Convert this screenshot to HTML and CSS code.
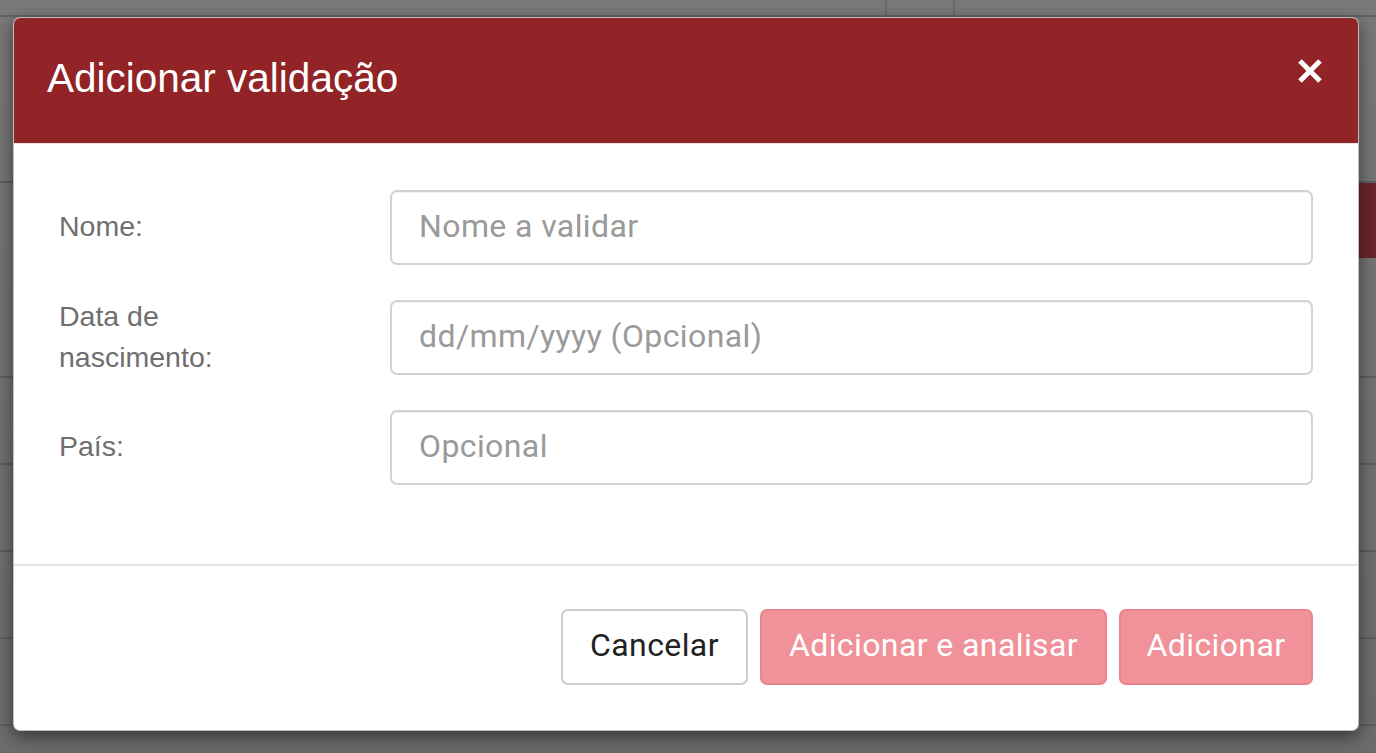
FILE: index.html
```html
<!DOCTYPE html>
<html lang="pt">
<head>
<meta charset="utf-8">
<title>Adicionar validação</title>
<link rel="stylesheet" href="styles.css">
</head>
<body>
<div class="page">
  <div class="topbar">
    <div class="tcell tcell-wide"></div>
    <div class="tcell tcell-mid"></div>
    <div class="tcell tcell-rest"></div>
  </div>
  <div class="row row-a"></div>
  <div class="row row-b"><div class="redblock"></div></div>
  <div class="row row-c"></div>
  <div class="row row-d"></div>
  <div class="row row-d"></div>
  <div class="row row-d"></div>
  <div class="row row-e"></div>
</div>

<div class="modal" role="dialog">
  <div class="modal-header">
    <h4 class="modal-title">Adicionar validação</h4>
    <button class="close" aria-label="Fechar">
      <svg width="26" height="26" viewBox="0 0 26 26"><path d="M3 3 L23 23 M23 3 L3 23" stroke="#fff" stroke-width="5" stroke-linecap="butt"/></svg>
    </button>
  </div>
  <div class="modal-body">
    <div class="form-row">
      <label class="form-label">Nome:</label>
      <input class="form-input" type="text" placeholder="Nome a validar">
    </div>
    <div class="form-row">
      <label class="form-label">Data de nascimento:</label>
      <input class="form-input" type="text" placeholder="dd/mm/yyyy (Opcional)">
    </div>
    <div class="form-row">
      <label class="form-label">País:</label>
      <input class="form-input" type="text" placeholder="Opcional">
    </div>
  </div>
  <div class="modal-footer">
    <button class="btn btn-default">Cancelar</button>
    <button class="btn btn-pink btn-wide">Adicionar e analisar</button>
    <button class="btn btn-pink">Adicionar</button>
  </div>
</div>
</body>
</html>
```

FILE: styles.css
```css
* { box-sizing: border-box; }
html, body { margin: 0; padding: 0; }
body {
  width: 1376px;
  height: 753px;
  overflow: hidden;
  background: #6f6f6f;
  font-family: "Liberation Sans", Arial, sans-serif;
}
.page {
  display: flex;
  flex-direction: column;
  height: 753px;
  background: linear-gradient(180deg, #797979 0%, #6c6c6c 100%);
}
.topbar {
  display: flex;
  height: 17px;
  flex-shrink: 0;
  border-bottom: 2px solid #636363;
}
.tcell { height: 100%; }
.tcell-wide { width: 887px; border-right: 2px solid #686868; }
.tcell-mid { width: 68px; border-right: 2px solid #686868; }
.tcell-rest { flex: 1; }
.row { border-bottom: 2px solid #5e5e5e; flex-shrink: 0; }
.row-a { height: 166px; }
.row-b { height: 195px; display: flex; justify-content: flex-end; align-items: flex-start; }
.redblock { width: 17px; height: 75px; background: #6b252b; }
.row-c { height: 87px; }
.row-d { height: 87px; }
.row-e { flex: 1; border-bottom: none; }

.modal {
  position: absolute;
  left: 13px;
  top: 17px;
  width: 1346px;
  height: 714px;
  background: #fff;
  border-radius: 7px;
  border: 1px solid rgba(0,0,0,0.25);
  box-shadow: 0 6px 18px rgba(0,0,0,0.5);
  display: flex;
  flex-direction: column;
  overflow: hidden;
}
.modal-header {
  height: 126px;
  flex-shrink: 0;
  background: #922326;
  border-bottom: 1px solid #e5e5e5;
  display: flex;
  align-items: center;
  justify-content: space-between;
  padding: 0 35px 0 33px;
}
.modal-title {
  margin: 0;
  color: #fff;
  font-size: 40.5px;
  font-weight: normal;
  line-height: 1.2;
  margin-top: -4px;
}
.close {
  border: 0;
  background: transparent;
  padding: 0;
  width: 26px;
  height: 26px;
  margin-top: -20px;
  display: flex;
  cursor: pointer;
}
.modal-body {
  flex: 1;
  padding: 46px 45px 0 45px;
  display: flex;
  flex-direction: column;
}
.form-row {
  display: flex;
  align-items: center;
  height: 75px;
  flex-shrink: 0;
  margin-bottom: 35px;
}
.form-label {
  width: 331px;
  flex-shrink: 0;
  padding-right: 110px;
  color: #6f6f6f;
  font-size: 28.5px;
  line-height: 41px;
  margin-top: -2px;
}
.form-input {
  height: 75px;
  flex: 1;
  min-width: 0;
  border: 2px solid #d3d3d3;
  border-radius: 7px;
  padding: 0 27px 4px 27px;
  font-family: Roboto, "Liberation Sans", sans-serif;
  font-size: 32px;
  letter-spacing: 0.4px;
  color: #555;
  box-shadow: inset 0 1px 1px rgba(0,0,0,0.06);
  outline: none;
}
.form-input::placeholder { color: #9a9a9a; }
.modal-footer {
  height: 166px;
  flex-shrink: 0;
  border-top: 2px solid #e5e5e5;
  display: flex;
  justify-content: flex-end;
  align-items: flex-start;
  gap: 12px;
  padding: 43px 45px 0 0;
}
.btn {
  height: 76px;
  border-radius: 7px;
  font-family: Roboto, "Liberation Sans", sans-serif;
  font-size: 32px;
  letter-spacing: 0.4px;
  padding: 0 0 4px 0;
  white-space: nowrap;
  cursor: pointer;
}
.btn-default {
  width: 187px;
  background: #fff;
  border: 2px solid #cccccc;
  color: #222;
}
.btn-pink {
  width: 194px;
  background: #f19199;
  border: 2px solid #e9848d;
  color: #fff;
}
.btn-wide { width: 347px; }
```
